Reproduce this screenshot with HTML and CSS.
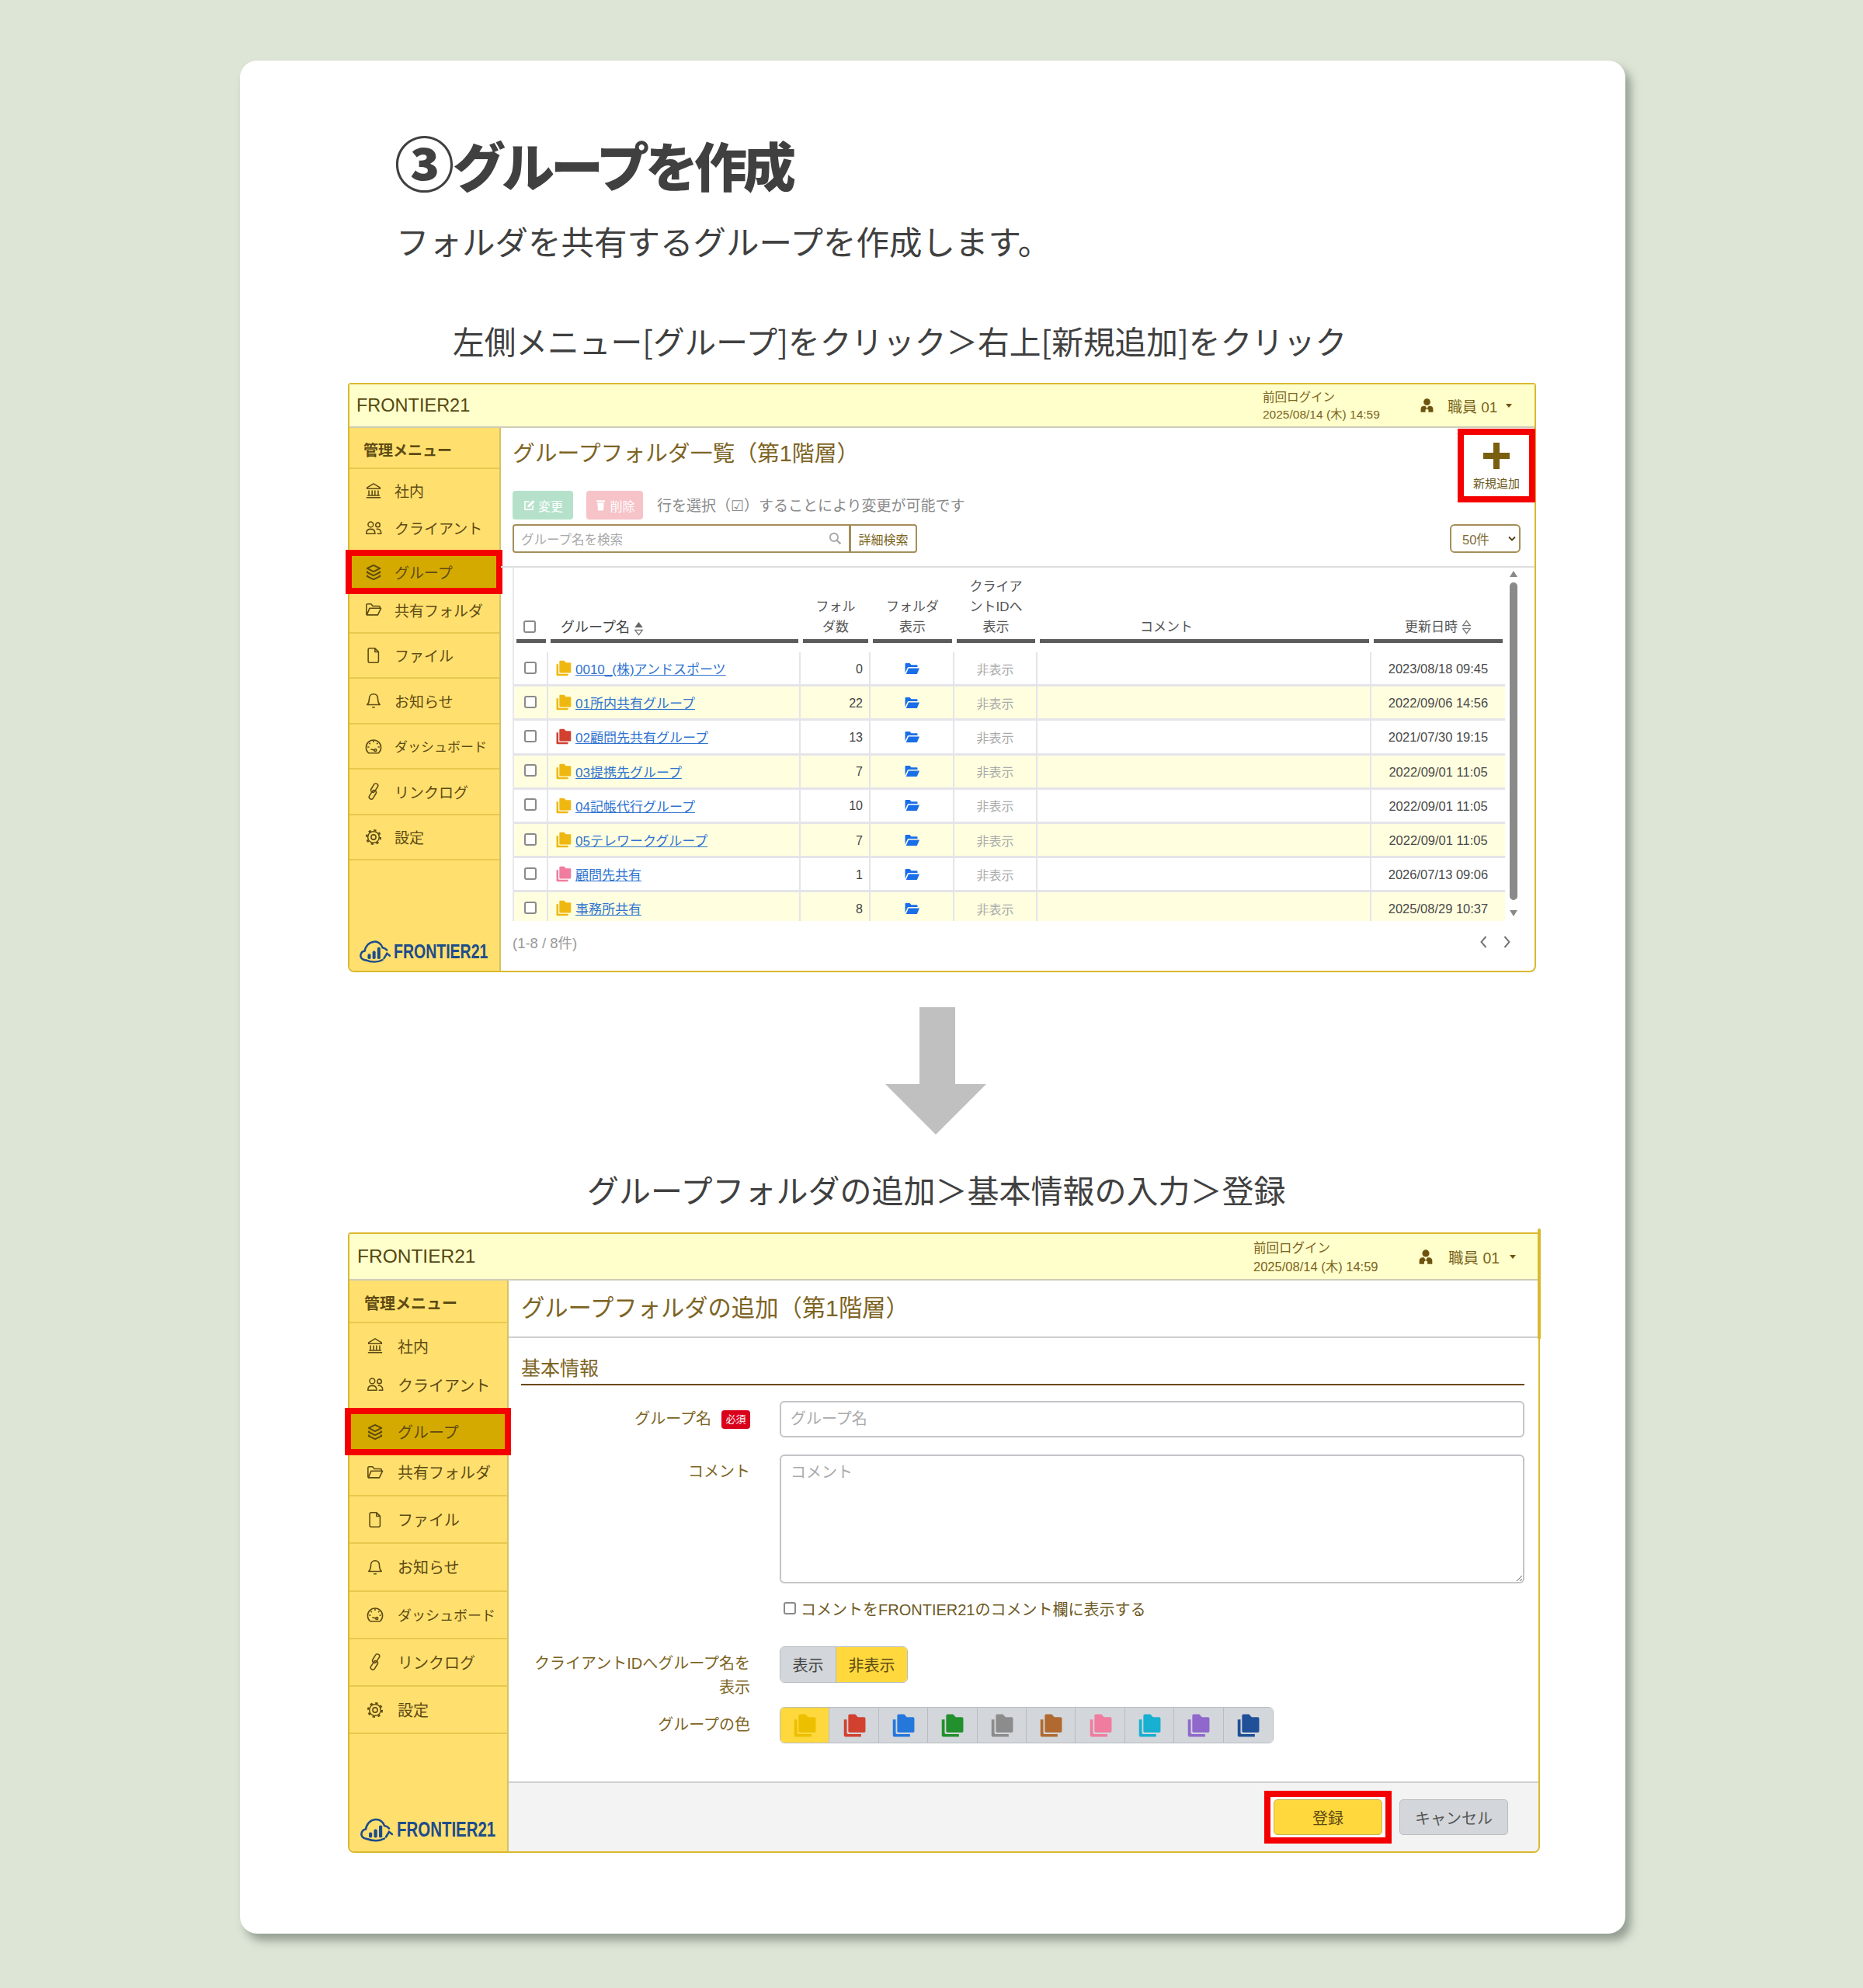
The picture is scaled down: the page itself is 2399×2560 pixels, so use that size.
FILE: index.html
```html
<!DOCTYPE html>
<html lang="ja">
<head>
    <meta charset="UTF-8">
    <title>グループを作成</title>
    <link rel="stylesheet" href="styles.css">
</head>
<body>
    <svg class="icon-defs" xmlns="http://www.w3.org/2000/svg">
        <symbol id="i-bank" viewBox="0 0 24 24"><path d="M12 2 3 7.500V9h18V7.500zM5.500 11.500V18M10 11.500V18M14 11.500V18M18.500 11.500V18M3.500 18.500h17M2 21.500h20" fill="none" stroke="currentColor" stroke-width="1.700"/></symbol>
        <symbol id="i-people" viewBox="0 0 24 24"><g fill="none" stroke="currentColor" stroke-width="1.700"><circle cx="8" cy="7" r="3.700"/><circle cx="18" cy="7.500" r="3"/><path d="M2 19c0-4 2.500-5.500 6-5.500s6 1.500 6 5.500v1H2zM16 13.500c3.500-.5 6.500 1 6.500 4.500v2H17"/></g></symbol>
        <symbol id="i-layers" viewBox="0 0 24 24"><g fill="none" stroke="currentColor" stroke-width="2.200" stroke-linejoin="round"><path d="M12 2 21 6.500 12 11 3 6.500z"/><path d="M4 10.500 3 12l9 4.500L21 12l-1-1.500"/><path d="M4 16 3 17.500 12 22l9-4.500-1-1.500"/></g></symbol>
        <symbol id="i-folder" viewBox="0 0 24 24"><path d="M2 19V5.500A1.500 1.500 0 0 1 3.500 4h5l2.500 3h8.500A1.500 1.500 0 0 1 21 8.500V10H6.500L2.500 19.500h15.500l4.500-9.500H21" fill="none" stroke="currentColor" stroke-width="1.700" stroke-linejoin="round"/></symbol>
        <symbol id="i-file" viewBox="0 0 24 24"><path d="M6.500 2H14l5 5v13a2 2 0 0 1-2 2H6.500a2 2 0 0 1-2-2V4a2 2 0 0 1 2-2zM14 2v5h5" fill="none" stroke="currentColor" stroke-width="1.700" stroke-linejoin="round"/></symbol>
        <symbol id="i-bell" viewBox="0 0 24 24"><path d="M12 3c-4 0-6 3-6 6.500 0 5-1 6.500-3 8.500h18c-2-2-3-3.500-3-8.500C18 6 16 3 12 3zM10 21.500h4" fill="none" stroke="currentColor" stroke-width="1.700" stroke-linejoin="round"/></symbol>
        <symbol id="i-gauge" viewBox="0 0 24 24"><g fill="none" stroke="currentColor" stroke-width="1.700"><path d="M5 21.500h14a10.500 10.500 0 1 0-14 0z"/><path d="M12 4v2.500M6 7.500l1.500 1.500M3.500 13H6M18 7.500 16.500 9M20.500 13H18M8 16l5 1.500"/><circle cx="14.500" cy="17.500" r="1.600"/></g></symbol>
        <symbol id="i-link" viewBox="0 0 24 24"><g fill="none" stroke="currentColor" stroke-width="1.700" transform="rotate(32 12 12)"><rect x="7.500" y="0.500" width="6" height="13.500" rx="3"/><rect x="10.500" y="10" width="6" height="13.500" rx="3"/></g></symbol>
        <symbol id="i-gear" viewBox="0 0 24 24"><g fill="none" stroke="currentColor"><circle cx="12" cy="12" r="3.400" stroke-width="1.700"/><circle cx="12" cy="12" r="8" stroke-width="1.600"/><circle cx="12" cy="12" r="9.800" stroke-width="2.400" stroke-dasharray="3.600 4.100"/></g></symbol>
        <symbol id="i-user" viewBox="0 0 24 24"><circle cx="12" cy="6.500" r="5.500" fill="currentColor"/><path d="M2 23v-5c0-3 2-5 5.500-5h1.700L12 17l2.800-4h1.700c3.500 0 5.500 2 5.500 5v5h-7.500v-4h-1l-1.500-2-1.500 2h-1v4z" fill="currentColor"/></symbol>
        <symbol id="i-stack" viewBox="0 0 20 20"><path d="M6.500 1.500h4.300l2 2.200h4.700a1 1 0 0 1 1 1v9.600a1 1 0 0 1-1 1H6.500a1 1 0 0 1-1-1V2.500a1 1 0 0 1 1-1z" fill="currentColor"/><path d="M2.200 5.500h2.200v10a.9.900 0 0 0 .9.900h9.900V18.500H3.200a1 1 0 0 1-1-1z" fill="currentColor"/></symbol>
        <symbol id="i-open" viewBox="0 0 20 20"><path d="M1 4a1 1 0 0 1 1-1h5l2 2.200h7a1 1 0 0 1 1 1V8H5.800a2 2 0 0 0-1.900 1.300L1 15.500z" fill="currentColor"/><path d="M5.500 9.500h14l-3 7a1 1 0 0 1-1 .6H2.200z" fill="currentColor"/></symbol>
        <symbol id="i-cloud" viewBox="0 0 42 30"><g fill="none" stroke="currentColor" stroke-width="2.600" stroke-linecap="round"><path d="M8 26.500C3 26 1 22.500 1.500 19.500c.5-3.500 3-5 5.500-5.500C8 7 13 2 19.500 1.500c5.500-.5 10 3 11.500 8 2.500.5 4.500 1.500 6 3.500"/><path d="M31 26c-6 3.500-15 3.500-22.500.5"/><path d="M33 24 37 17.500 41 20.500"/></g><g fill="currentColor"><rect x="11" y="18" width="4.200" height="7" rx="1.800"/><rect x="17.500" y="14" width="4.200" height="11" rx="1.800"/><rect x="24" y="9" width="4.200" height="16" rx="1.800"/></g></symbol>
        <symbol id="i-sort" viewBox="0 0 13 20"><path d="M6.500 1.500 11.500 8h-10z" fill="none" stroke="#777" stroke-width="1.400"/><path d="M1.500 12h10l-5 6.500z" fill="none" stroke="#777" stroke-width="1.400"/></symbol>
        <symbol id="i-sort-up" viewBox="0 0 13 20"><path d="M6.500 1 12 8.500H1z" fill="#666"/><path d="M1.500 12h10l-5 6.500z" fill="none" stroke="#777" stroke-width="1.400"/></symbol>
    </svg>

    <main class="card">
        <h1 class="page-title"><span class="circled">③</span>グループを作成</h1>
        <p class="page-lead">フォルダを共有するグループを作成します。</p>

        <h2 class="step step-first">左側メニュー[グループ]をクリック＞右上[新規追加]をクリック</h2>

        <section class="window window-list">
            <header class="topbar">
                <span class="brand">FRONTIER21</span>
                <div class="login">前回ログイン<br>2025/08/14 (木) 14:59</div>
                <div class="user">
                    <svg class="user-icon"><use href="#i-user"/></svg>
                    <span class="user-name">職員 01</span>
                    <span class="caret"></span>
                </div>
            </header>
            <div class="window-body">
                <nav class="sidebar">
                    <div class="menu-title">管理メニュー</div>
                    <a class="menu-item no-line h-top"><svg class="menu-icon"><use href="#i-bank"/></svg>社内</a>
                    <a class="menu-item no-line h-second"><svg class="menu-icon"><use href="#i-people"/></svg>クライアント</a>
                    <a class="menu-item no-line active"><svg class="menu-icon"><use href="#i-layers"/></svg>グループ</a>
                    <a class="menu-item"><svg class="menu-icon"><use href="#i-folder"/></svg>共有フォルダ</a>
                    <a class="menu-item"><svg class="menu-icon"><use href="#i-file"/></svg>ファイル</a>
                    <a class="menu-item"><svg class="menu-icon"><use href="#i-bell"/></svg>お知らせ</a>
                    <a class="menu-item small"><svg class="menu-icon"><use href="#i-gauge"/></svg>ダッシュボード</a>
                    <a class="menu-item"><svg class="menu-icon"><use href="#i-link"/></svg>リンクログ</a>
                    <a class="menu-item"><svg class="menu-icon"><use href="#i-gear"/></svg>設定</a>
                    <div class="logo"><svg class="logo-cloud"><use href="#i-cloud"/></svg><span>FRONTIER21</span></div>
                </nav>
                <div class="content">
                    <div class="list-head">
                        <div class="title-row">
                            <div class="list-title">グループフォルダ一覧（第1階層）</div>
                            <a class="new-btn"><span class="plus"></span><span class="new-label">新規追加</span></a>
                        </div>
                        <div class="actions">
                            <span class="soft-btn soft-green">
                                <svg class="soft-icon" viewBox="0 0 16 16"><path d="M2 3h7L7.500 4.500H3.500v8h8V9L13 7.500V14H2zM6 8.500 12.500 2 14.500 4 8 10.500H6z" fill="currentColor"/></svg>変更
                            </span>
                            <span class="soft-btn soft-red">
                                <svg class="soft-icon" viewBox="0 0 16 16"><path d="M3 2h10v2H3zM4 5h8l-.7 9.500H4.700z" fill="currentColor"/></svg>削除
                            </span>
                            <span class="hint">行を選択（☑）することにより変更が可能です</span>
                        </div>
                        <div class="search-row">
                            <div class="search-box">
                                <span>グループ名を検索</span>
                                <svg class="search-icon" viewBox="0 0 16 16"><circle cx="6.500" cy="6.500" r="4.800" fill="none" stroke="currentColor" stroke-width="1.800"/><path d="m10 10 4.500 4.500" stroke="currentColor" stroke-width="2.200"/></svg>
                            </div>
                            <a class="search-more">詳細検索</a>
                            <div class="per-page">50件<svg class="select-arrow" viewBox="0 0 10 6"><path d="M1 1l4 4 4-4" fill="none" stroke="currentColor" stroke-width="1.800"/></svg></div>
                        </div>
                    </div>

                    <div class="table-area">
                        <div class="table">
                            <div class="t-head">
                                <div class="th"><input class="check" type="checkbox"></div>
                                <div class="th th-name">グループ名<svg class="sort"><use href="#i-sort-up"/></svg></div>
                                <div class="th th-center">フォル<br>ダ数</div>
                                <div class="th th-center">フォルダ<br>表示</div>
                                <div class="th th-center">クライア<br>ントIDへ<br>表示</div>
                                <div class="th th-center th-comment">コメント</div>
                                <div class="th th-center">更新日時<svg class="sort"><use href="#i-sort"/></svg></div>
                            </div>
                            <div class="t-row">
                                <div class="td td-check"><input class="check" type="checkbox"></div>
                                <div class="td td-name"><svg class="stack c-yellow"><use href="#i-stack"/></svg><a class="group-link">0010_(株)アンドスポーツ</a></div>
                                <div class="td td-count">0</div>
                                <div class="td td-open"><svg class="open-icon"><use href="#i-open"/></svg></div>
                                <div class="td td-hidden">非表示</div>
                                <div class="td"></div>
                                <div class="td td-date">2023/08/18 09:45</div>
                            </div>
                            <div class="t-row">
                                <div class="td td-check"><input class="check" type="checkbox"></div>
                                <div class="td td-name"><svg class="stack c-yellow"><use href="#i-stack"/></svg><a class="group-link">01所内共有グループ</a></div>
                                <div class="td td-count">22</div>
                                <div class="td td-open"><svg class="open-icon"><use href="#i-open"/></svg></div>
                                <div class="td td-hidden">非表示</div>
                                <div class="td"></div>
                                <div class="td td-date">2022/09/06 14:56</div>
                            </div>
                            <div class="t-row">
                                <div class="td td-check"><input class="check" type="checkbox"></div>
                                <div class="td td-name"><svg class="stack c-red"><use href="#i-stack"/></svg><a class="group-link">02顧問先共有グループ</a></div>
                                <div class="td td-count">13</div>
                                <div class="td td-open"><svg class="open-icon"><use href="#i-open"/></svg></div>
                                <div class="td td-hidden">非表示</div>
                                <div class="td"></div>
                                <div class="td td-date">2021/07/30 19:15</div>
                            </div>
                            <div class="t-row">
                                <div class="td td-check"><input class="check" type="checkbox"></div>
                                <div class="td td-name"><svg class="stack c-yellow"><use href="#i-stack"/></svg><a class="group-link">03提携先グループ</a></div>
                                <div class="td td-count">7</div>
                                <div class="td td-open"><svg class="open-icon"><use href="#i-open"/></svg></div>
                                <div class="td td-hidden">非表示</div>
                                <div class="td"></div>
                                <div class="td td-date">2022/09/01 11:05</div>
                            </div>
                            <div class="t-row">
                                <div class="td td-check"><input class="check" type="checkbox"></div>
                                <div class="td td-name"><svg class="stack c-yellow"><use href="#i-stack"/></svg><a class="group-link">04記帳代行グループ</a></div>
                                <div class="td td-count">10</div>
                                <div class="td td-open"><svg class="open-icon"><use href="#i-open"/></svg></div>
                                <div class="td td-hidden">非表示</div>
                                <div class="td"></div>
                                <div class="td td-date">2022/09/01 11:05</div>
                            </div>
                            <div class="t-row">
                                <div class="td td-check"><input class="check" type="checkbox"></div>
                                <div class="td td-name"><svg class="stack c-yellow"><use href="#i-stack"/></svg><a class="group-link">05テレワークグループ</a></div>
                                <div class="td td-count">7</div>
                                <div class="td td-open"><svg class="open-icon"><use href="#i-open"/></svg></div>
                                <div class="td td-hidden">非表示</div>
                                <div class="td"></div>
                                <div class="td td-date">2022/09/01 11:05</div>
                            </div>
                            <div class="t-row">
                                <div class="td td-check"><input class="check" type="checkbox"></div>
                                <div class="td td-name"><svg class="stack c-pink"><use href="#i-stack"/></svg><a class="group-link">顧問先共有</a></div>
                                <div class="td td-count">1</div>
                                <div class="td td-open"><svg class="open-icon"><use href="#i-open"/></svg></div>
                                <div class="td td-hidden">非表示</div>
                                <div class="td"></div>
                                <div class="td td-date">2026/07/13 09:06</div>
                            </div>
                            <div class="t-row">
                                <div class="td td-check"><input class="check" type="checkbox"></div>
                                <div class="td td-name"><svg class="stack c-yellow"><use href="#i-stack"/></svg><a class="group-link">事務所共有</a></div>
                                <div class="td td-count">8</div>
                                <div class="td td-open"><svg class="open-icon"><use href="#i-open"/></svg></div>
                                <div class="td td-hidden">非表示</div>
                                <div class="td"></div>
                                <div class="td td-date">2025/08/29 10:37</div>
                            </div>
                        </div>
                        <div class="scrollbar">
                            <span class="scroll-up"></span>
                            <span class="scroll-thumb"></span>
                            <span class="scroll-down"></span>
                        </div>
                    </div>

                    <div class="list-foot">
                        <span class="range">(1-8 / 8件)</span>
                        <div class="pager">
                            <svg class="chevron" viewBox="0 0 10 18"><path d="M8 2 2 9l6 7" fill="none" stroke="currentColor" stroke-width="2"/></svg>
                            <svg class="chevron" viewBox="0 0 10 18"><path d="m2 2 6 7-6 7" fill="none" stroke="currentColor" stroke-width="2"/></svg>
                        </div>
                    </div>
                </div>
            </div>
        </section>

        <svg class="down-arrow" viewBox="0 0 130 164"><path d="M44 0h46v99h40L65 164 0 99h44z" fill="#c0c0c0"/></svg>

        <h2 class="step step-second">グループフォルダの追加＞基本情報の入力＞登録</h2>

        <section class="window window-form">
            <header class="topbar">
                <span class="brand">FRONTIER21</span>
                <div class="login">前回ログイン<br>2025/08/14 (木) 14:59</div>
                <div class="user">
                    <svg class="user-icon"><use href="#i-user"/></svg>
                    <span class="user-name">職員 01</span>
                    <span class="caret"></span>
                </div>
            </header>
            <div class="window-body">
                <nav class="sidebar">
                    <div class="menu-title">管理メニュー</div>
                    <a class="menu-item no-line h-top"><svg class="menu-icon"><use href="#i-bank"/></svg>社内</a>
                    <a class="menu-item no-line h-second"><svg class="menu-icon"><use href="#i-people"/></svg>クライアント</a>
                    <a class="menu-item no-line active"><svg class="menu-icon"><use href="#i-layers"/></svg>グループ</a>
                    <a class="menu-item"><svg class="menu-icon"><use href="#i-folder"/></svg>共有フォルダ</a>
                    <a class="menu-item"><svg class="menu-icon"><use href="#i-file"/></svg>ファイル</a>
                    <a class="menu-item"><svg class="menu-icon"><use href="#i-bell"/></svg>お知らせ</a>
                    <a class="menu-item small"><svg class="menu-icon"><use href="#i-gauge"/></svg>ダッシュボード</a>
                    <a class="menu-item"><svg class="menu-icon"><use href="#i-link"/></svg>リンクログ</a>
                    <a class="menu-item"><svg class="menu-icon"><use href="#i-gear"/></svg>設定</a>
                    <div class="logo"><svg class="logo-cloud"><use href="#i-cloud"/></svg><span>FRONTIER21</span></div>
                </nav>
                <div class="content">
                    <div class="form-title">グループフォルダの追加（第1階層）</div>
                    <div class="form-body">
                        <div class="section-title">基本情報</div>
                        <div class="field field-name">
                            <label class="field-label">グループ名<span class="required">必須</span></label>
                            <input class="text-input" type="text" placeholder="グループ名">
                        </div>
                        <div class="field field-comment">
                            <label class="field-label">コメント</label>
                            <textarea class="text-area" placeholder="コメント"></textarea>
                        </div>
                        <div class="field field-check">
                            <span></span>
                            <label class="check-label"><input class="check" type="checkbox">コメントをFRONTIER21のコメント欄に表示する</label>
                        </div>
                        <div class="field field-toggle">
                            <label class="field-label">クライアントIDへグループ名を<br>表示</label>
                            <div class="btn-group">
                                <a class="seg seg-show">表示</a>
                                <a class="seg seg-hide on">非表示</a>
                            </div>
                        </div>
                        <div class="field field-color">
                            <label class="field-label">グループの色</label>
                            <div class="btn-group">
                                <a class="seg seg-color on"><svg class="color-icon c-yellow-dark"><use href="#i-stack"/></svg></a>
                                <a class="seg seg-color"><svg class="color-icon c-red"><use href="#i-stack"/></svg></a>
                                <a class="seg seg-color"><svg class="color-icon c-blue"><use href="#i-stack"/></svg></a>
                                <a class="seg seg-color"><svg class="color-icon c-green"><use href="#i-stack"/></svg></a>
                                <a class="seg seg-color"><svg class="color-icon c-gray"><use href="#i-stack"/></svg></a>
                                <a class="seg seg-color"><svg class="color-icon c-brown"><use href="#i-stack"/></svg></a>
                                <a class="seg seg-color"><svg class="color-icon c-pink"><use href="#i-stack"/></svg></a>
                                <a class="seg seg-color"><svg class="color-icon c-cyan"><use href="#i-stack"/></svg></a>
                                <a class="seg seg-color"><svg class="color-icon c-purple"><use href="#i-stack"/></svg></a>
                                <a class="seg seg-color"><svg class="color-icon c-navy"><use href="#i-stack"/></svg></a>
                            </div>
                        </div>
                    </div>
                    <div class="form-foot">
                        <div class="save-frame"><a class="foot-btn btn-save">登録</a></div>
                        <a class="foot-btn btn-cancel">キャンセル</a>
                    </div>
                </div>
            </div>
        </section>
    </main>
</body>
</html>
```

FILE: styles.css
```css
* {
    box-sizing: border-box;
}

body {
    margin: 0;
    background-color: #dde5d7;
    font-family: "Liberation Sans", "Noto Sans CJK JP", sans-serif;
    color: #404040;
    padding: 78px 0 70px 309px;
}

a {
    text-decoration: none;
}

.icon-defs {
    display: none;
}

.card {
    width: 1784px;
    height: 2412px;
    padding-top: 94px;
    background: #fff;
    border-radius: 22px;
    box-shadow: 7px 9px 12px rgba(90, 100, 90, 0.55);
}

.page-title {
    height: 80px;
    margin: 0 0 0 199px;
    font-family: "Noto Sans CJK JP", sans-serif;
    font-size: 68px;
    font-weight: 900;
    line-height: 80px;
    letter-spacing: -5px;
    color: #404040;
}

.circled {
    font-size: 77px;
    line-height: 0;
    letter-spacing: -2px;
}

.page-lead {
    margin: 33px 0 0 201px;
    font-family: "Noto Sans CJK JP", sans-serif;
    font-size: 42.500px;
    line-height: 50px;
}

.step {
    margin: 0;
    font-family: "Noto Sans CJK JP", sans-serif;
    font-size: 40.700px;
    font-weight: 400;
    line-height: 50px;
    white-space: nowrap;
}

.step-first {
    margin: 79px 0 29px 274px;
}

.step-second {
    margin: 45px 0 31px 447px;
    font-size: 41px;
}

.window {
    margin-left: 139px;
    display: flex;
    flex-direction: column;
    position: relative;
    border: 2px solid #d9b92f;
    border-radius: 4px 4px 8px 8px;
    overflow: visible;
    color: #5e4a14;
}

.window-list {
    width: 1530px;
    height: 759px;
    --head-h: 56px;
}

.window-form {
    width: 1535px;
    height: 799px;
    --head-h: 60px;
}

.window-form::after {
    content: "";
    position: absolute;
    right: -3px;
    top: -7px;
    width: 4px;
    height: 143px;
    border-radius: 2px;
    background: #d9b92f;
}

.down-arrow {
    display: block;
    width: 130px;
    height: 164px;
    margin: 45px 0 0 831px;
}

/* 上部バー */
.topbar {
    height: var(--head-h);
    display: flex;
    align-items: center;
    background: #ffffcc;
    border-bottom: 2px solid #cfcdb8;
    padding-left: 9px;
    flex-shrink: 0;
}

.brand {
    font-size: 23.500px;
    color: #55480f;
}

.login {
    margin-left: auto;
    margin-top: 2px;
    width: 202px;
    font-size: 15.500px;
    line-height: 22px;
    color: #7a6420;
}

.user {
    display: flex;
    align-items: center;
    width: 148px;
}

.user-icon {
    width: 19px;
    height: 20px;
    color: #6e5310;
}

.user-name {
    margin-left: 17px;
    font-size: 19px;
    color: #7a6420;
}

.caret {
    margin-left: 11px;
    border-left: 4px solid transparent;
    border-right: 4px solid transparent;
    border-top: 5px solid #6e5310;
}

.window-form .brand {
    font-size: 24.500px;
    padding-left: 1px;
}

.window-form .login {
    width: 212px;
    font-size: 16.500px;
    line-height: 24px;
}

.window-form .user {
    width: 155px;
}

.window-form .user-icon {
    width: 20px;
    height: 21px;
}

.window-form .user-name {
    margin-left: 19px;
    font-size: 19.500px;
}

.window-form .caret {
    margin-left: 13px;
}

.window-body {
    flex: 1;
    display: flex;
    min-height: 0;
}

/* サイドメニュー */
.sidebar {
    width: 195px;
    flex-shrink: 0;
    display: flex;
    flex-direction: column;
    background: #ffe06e;
    border-right: 2px solid #d4c26a;
    border-radius: 0 0 0 6px;
}

.menu-title {
    height: 53px;
    padding: 3px 0 0 18px;
    display: flex;
    align-items: center;
    font-size: 19px;
    font-weight: 700;
    color: #5e4a14;
    border-bottom: 2px solid #e8c84e;
}

.menu-item {
    height: 58.500px;
    padding-left: 21px;
    display: flex;
    align-items: center;
    font-size: 19px;
    color: #5e4a14;
    border-bottom: 2px solid #e8c84e;
}

.menu-item.small {
    font-size: 17px;
}

.menu-icon {
    width: 22px;
    height: 22px;
    margin-right: 16px;
    flex-shrink: 0;
    margin-left: -1px;
}

.no-line {
    border-bottom: 0;
}

.h-top {
    height: 55px;
}

.h-second {
    height: 41px;
}

.active {
    height: 41px;
    margin: 16px 4px 0 3px;
    padding-left: 18px;
    background: #d4aa00;
    outline: 8px solid #f40000;
}

.logo {
    margin-top: auto;
    padding: 0 0 10px 13px;
    display: flex;
    align-items: center;
    color: #1d4c8c;
}

.logo span {
    width: 123px;
    margin-left: 4px;
    font-size: 25px;
    font-weight: 700;
    white-space: nowrap;
    transform: scaleX(0.78);
    transform-origin: left center;
}

.logo-cloud {
    width: 40px;
    height: 29px;
    flex-shrink: 0;
}

.window-form .sidebar {
    width: 205px;
}

.window-form .menu-title {
    height: 55px;
    padding-left: 19px;
    font-size: 20px;
}

.window-form .menu-item {
    height: 61.200px;
    padding-left: 23px;
    font-size: 20px;
}

.window-form .menu-item.small {
    font-size: 18px;
}

.window-form .menu-icon {
    margin-right: 18px;
}

.window-form .h-top {
    height: 58px;
}

.window-form .h-second {
    height: 42px;
}

.window-form .active {
    height: 45px;
    margin: 17px 3px 0 2px;
    padding-left: 21px;
}

.window-form .logo {
    padding: 0 0 12px 14px;
}

.window-form .logo-cloud {
    width: 42px;
    height: 31px;
}

.window-form .logo span {
    width: 128px;
    margin-left: 5px;
    font-size: 27px;
    transform: scaleX(0.757);
}

/* 一覧 */
.content {
    flex: 1;
    min-width: 0;
    display: flex;
    flex-direction: column;
}

.list-head {
    height: 180px;
    padding-left: 15px;
    border-bottom: 2px solid #dedede;
}

.title-row {
    height: 81px;
    display: flex;
    justify-content: space-between;
}

.list-title {
    font-size: 28.800px;
    line-height: 67px;
    color: #7d6424;
}

.new-btn {
    width: 84px;
    height: 79px;
    margin: 9px 7px 0 0;
    display: flex;
    flex-direction: column;
    align-items: center;
    outline: 8px solid #f40000;
}

.plus {
    width: 34px;
    height: 34px;
    margin-top: 10px;
    background:
        linear-gradient(#7a5f10, #7a5f10) center / 34px 8px no-repeat,
        linear-gradient(#7a5f10, #7a5f10) center / 8px 34px no-repeat;
}

.new-label {
    margin-top: 7px;
    font-size: 15px;
    color: #6d5a20;
}

.actions {
    height: 37px;
    display: flex;
    align-items: center;
    margin-bottom: 6px;
}

.soft-btn {
    width: 78px;
    height: 37px;
    display: flex;
    align-items: center;
    justify-content: center;
    border-radius: 4px;
    font-size: 16px;
    color: #fff;
    margin-right: 17px;
}

.soft-green {
    background: #b5e1cb;
}

.soft-red {
    width: 73px;
    background: #f6c3c8;
}

.soft-icon {
    width: 17px;
    height: 17px;
    margin-right: 3px;
}

.hint {
    margin: 0 0 3px 1px;
    font-size: 19px;
    color: #8a8a8a;
}

.search-row {
    height: 37px;
    display: flex;
    align-items: stretch;
    padding-right: 18px;
}

.search-box {
    width: 435px;
    display: flex;
    align-items: center;
    justify-content: space-between;
    padding: 0 9px 0 9px;
    border: 2px solid #a48f5a;
    border-radius: 4px 0 0 4px;
    font-size: 16.500px;
    color: #aaa;
}

.search-icon {
    width: 17px;
    height: 17px;
    color: #aaa;
}

.search-more {
    width: 87px;
    display: flex;
    align-items: center;
    justify-content: center;
    margin-left: -1px;
    border: 2px solid #a48f5a;
    border-radius: 0 4px 4px 0;
    font-size: 16px;
    color: #7a6420;
}

.per-page {
    width: 91px;
    margin-left: auto;
    display: flex;
    align-items: center;
    justify-content: space-between;
    padding: 0 4px 0 14px;
    border: 2px solid #a48f5a;
    border-radius: 6px;
    font-size: 16.500px;
    color: #7d6a36;
}

.select-arrow {
    width: 10px;
    height: 7px;
    color: #4a3c10;
}

/* テーブル */
.table-area {
    height: 455px;
    display: flex;
    padding-left: 15px;
    overflow: hidden;
}

.table {
    width: 1278px;
    border-left: 2px solid #e8e8ec;
}

.t-head,
.t-row {
    display: grid;
    grid-template-columns: 44px 325px 90px 108px 107px 430px 172px;
}

.t-head {
    height: 97px;
    margin-bottom: 12px;
}

.th {
    margin: 0 3px;
    padding-bottom: 2px;
    border-bottom: 5px solid #5c5c5c;
    align-self: end;
    min-height: 33px;
    font-size: 17px;
    line-height: 26px;
    color: #555;
    display: flex;
    align-items: flex-end;
}

.th-center {
    display: block;
    text-align: center;
}

.th-comment {
    padding-right: 98px;
}

.th-name {
    padding-left: 13px;
    font-size: 18px;
    color: #444;
}

.th .check {
    margin: 0 0 6px 9px;
}

.sort {
    width: 13px;
    height: 19px;
    margin-left: 5px;
    vertical-align: -4px;
}

.th-name .sort {
    margin-bottom: 2px;
}

.t-row {
    height: 44.200px;
    border-bottom: 3px solid #e4e4ea;
}

.t-row:nth-child(odd) {
    background: #ffffe0;
}

.td {
    display: flex;
    align-items: center;
    border-right: 2px solid #e4e4ea;
    font-size: 16px;
    color: #444;
}

.td:last-child {
    border-right: 0;
}

.td-check {
    padding-left: 13px;
}

.check {
    width: 16px;
    height: 16px;
    margin: 0;
    appearance: none;
    background: #fff;
    border: 2px solid #8a8a8a;
    border-radius: 3px;
    flex-shrink: 0;
}

.td-check .check {
    margin-bottom: 2px;
}

.td-name {
    padding-left: 8px;
}

.stack {
    width: 23px;
    height: 23px;
    margin-right: 4px;
    flex-shrink: 0;
}

.group-link {
    font-size: 17px;
    color: #2f74d0;
    text-decoration: underline;
}

.td-count {
    justify-content: flex-end;
    padding: 2px 8px 0 0;
}

.td-open {
    justify-content: center;
}

.open-icon {
    width: 21px;
    height: 20px;
    color: #1a6ee8;
}

.td-hidden {
    justify-content: center;
    color: #aaa;
}

.td-date {
    justify-content: center;
    padding-top: 2px;
    font-size: 16.500px;
    color: #4a4a4a;
}

.scrollbar {
    width: 12px;
    margin-left: 5px;
    display: flex;
    flex-direction: column;
    align-items: center;
}

.scroll-up,
.scroll-down {
    border-left: 5px solid transparent;
    border-right: 5px solid transparent;
    flex-shrink: 0;
}

.scroll-up {
    margin-top: 4px;
    border-bottom: 8px solid #8a8a8a;
}

.scroll-thumb {
    width: 10px;
    height: 409px;
    margin-top: 7px;
    border-radius: 5px;
    background: #8a8a8a;
}

.scroll-down {
    margin-top: 13px;
    border-top: 8px solid #8a8a8a;
}

.list-foot {
    flex: 1;
    padding: 0 30px 10px 15px;
    display: flex;
    align-items: center;
    justify-content: space-between;
}

.range {
    font-size: 18.500px;
    color: #999;
}

.pager {
    display: flex;
    gap: 19px;
}

.chevron {
    width: 11px;
    height: 18px;
    color: #777;
}

/* 追加フォーム */
.form-title {
    height: 74px;
    flex-shrink: 0;
    padding: 7px 0 0 16px;
    border-bottom: 2px solid #cfcfcf;
    font-size: 30.300px;
    line-height: 58px;
    color: #7d6424;
}

.form-body {
    flex: 1;
    padding: 0 18px 0 16px;
}

.section-title {
    height: 61px;
    padding-top: 21px;
    border-bottom: 2px solid #6b4a10;
    font-size: 25px;
    line-height: 36px;
    color: #7d6424;
}

.field {
    display: grid;
    grid-template-columns: 295px 1fr;
    column-gap: 38px;
}

.field-label {
    display: flex;
    justify-content: flex-end;
    align-items: center;
    flex-wrap: wrap;
    font-size: 20px;
    line-height: 31px;
    text-align: right;
    color: #7d6424;
}

.field-name {
    margin-top: 20px;
}

.required {
    margin-left: 13px;
    width: 37px;
    height: 24px;
    display: flex;
    align-items: center;
    justify-content: center;
    border-radius: 4px;
    background: #d9001b;
    font-size: 13px;
    color: #fff;
}

.text-input,
.text-area {
    display: block;
    width: 100%;
    padding: 0 12px;
    border: 2px solid #c4c4c8;
    border-radius: 6px;
    font-family: inherit;
    font-size: 20px;
    color: #444;
    background: #fff;
}

.text-input {
    height: 47px;
}

.text-input::placeholder,
.text-area::placeholder {
    color: #aaa;
}

.text-area {
    height: 166px;
    padding-top: 5px;
    resize: vertical;
}

.field-comment {
    margin-top: 22px;
}

.field-comment .field-label {
    align-items: flex-start;
    padding-top: 7px;
}

.field-check {
    margin-top: 18px;
}

.check-label {
    display: flex;
    align-items: center;
    height: 28px;
    padding-left: 5px;
    font-size: 20px;
    color: #6e5a24;
}

.check-label .check {
    margin-right: 6px;
}

.field-toggle {
    margin-top: 35px;
}

.field-toggle .field-label {
    display: block;
    margin-top: 7px;
}

.btn-group {
    display: inline-flex;
    justify-self: start;
    height: 47px;
    border: 1px solid #b9bcc0;
    border-radius: 6px;
    overflow: hidden;
}

.seg {
    display: flex;
    align-items: center;
    justify-content: center;
    background: #d3d6da;
    font-size: 20px;
    color: #444;
    border-right: 1px solid #b9bcc0;
}

.seg:last-child {
    border-right: 0;
}

.seg.on {
    background: #ffd83d;
    color: #5e4a14;
}

.seg-show {
    width: 72px;
}

.seg-hide {
    width: 91px;
}

.field-color {
    margin-top: 9px;
}

.seg-color {
    width: 63.400px;
}

.color-icon {
    width: 34px;
    height: 34px;
}

.c-yellow { color: #efb810; }
.c-yellow-dark { color: #ecc000; }
.c-red { color: #d24030; }
.c-blue { color: #2478dc; }
.c-green { color: #22902c; }
.c-gray { color: #8c8c8c; }
.c-brown { color: #b06a30; }
.c-pink { color: #f07ca0; }
.c-cyan { color: #18b0d0; }
.c-purple { color: #9068cc; }
.c-navy { color: #1f5098; }

.form-foot {
    height: 90px;
    flex-shrink: 0;
    display: flex;
    justify-content: flex-end;
    align-items: center;
    gap: 10px;
    padding-right: 39px;
    background: #f3f3f3;
    border-top: 2px solid #cfcfcf;
    border-radius: 0 0 6px 0;
}

.save-frame {
    padding: 3px 4px;
    border: 8px solid #f40000;
    background: #fff;
}

.foot-btn {
    width: 140px;
    height: 46px;
    display: flex;
    align-items: center;
    justify-content: center;
    border-radius: 5px;
    font-size: 20px;
}

.btn-save {
    background: #ffd83d;
    color: #5e4a14;
    border: 1px solid #c9b24a;
}

.btn-cancel {
    background: #d3d6da;
    color: #555;
    border: 1px solid #b9bcc0;
}
```
